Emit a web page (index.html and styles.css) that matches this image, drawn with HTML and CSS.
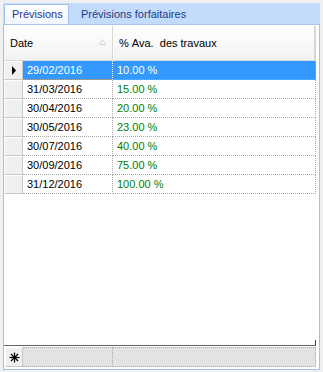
FILE: index.html
```html
<!DOCTYPE html>
<html lang="fr">
<head>
    <meta charset="UTF-8">
    <title>Prévisions</title>
    <link rel="stylesheet" href="styles.css">
</head>
<body>
    <div class="window">
        <div class="tabs">
            <div class="tab active">Prévisions</div>
            <div class="tab">Prévisions forfaitaires</div>
        </div>

        <div class="panel">
            <div class="grid">
                <div class="grid-head">
                    <div class="head-cell head-date">
                        <span>Date</span>
                        <svg class="sort" width="7" height="6" viewBox="0 0 7 6">
                            <path d="M0.5 5.5 L3.5 0.5 L6.5 5.5 Z" fill="none" stroke="#d4d4d4" stroke-width="1"/>
                        </svg>
                    </div>
                    <div class="head-cell head-pct">%&nbsp;Ava.&nbsp; des travaux</div>
                </div>

                <div class="rows">
                    <div class="row selected">
                        <div class="row-head">
                            <svg width="6" height="9" viewBox="0 0 6 9"><path d="M1 0 L5 4.5 L1 9 Z" fill="#000"/></svg>
                        </div>
                        <div class="cell date">29/02/2016</div>
                        <div class="cell pct">10.00 %</div>
                    </div>
                    <div class="row">
                        <div class="row-head"></div>
                        <div class="cell date">31/03/2016</div>
                        <div class="cell pct">15.00 %</div>
                    </div>
                    <div class="row">
                        <div class="row-head"></div>
                        <div class="cell date">30/04/2016</div>
                        <div class="cell pct">20.00 %</div>
                    </div>
                    <div class="row">
                        <div class="row-head"></div>
                        <div class="cell date">30/05/2016</div>
                        <div class="cell pct">23.00 %</div>
                    </div>
                    <div class="row">
                        <div class="row-head"></div>
                        <div class="cell date">30/07/2016</div>
                        <div class="cell pct">40.00 %</div>
                    </div>
                    <div class="row">
                        <div class="row-head"></div>
                        <div class="cell date">30/09/2016</div>
                        <div class="cell pct">75.00 %</div>
                    </div>
                    <div class="row">
                        <div class="row-head"></div>
                        <div class="cell date">31/12/2016</div>
                        <div class="cell pct">100.00 %</div>
                    </div>
                </div>

                <div class="filler"></div>

                <div class="new-row">
                    <div class="row-head">
                        <svg width="11" height="11" viewBox="0 0 11 11">
                            <g stroke="#000" stroke-width="1.2">
                                <line x1="5.5" y1="0.5" x2="5.5" y2="10.5"/>
                                <line x1="0.5" y1="5.5" x2="10.5" y2="5.5"/>
                                <line x1="2" y1="2" x2="9" y2="9"/>
                                <line x1="9" y1="2" x2="2" y2="9"/>
                            </g>
                        </svg>
                    </div>
                    <div class="cell date"></div>
                    <div class="cell pct"></div>
                </div>
            </div>
        </div>
    </div>
</body>
</html>
```

FILE: styles.css
```css
:root {
    --tab-band: #c3dcfb;
    --tab-border: #9fc1ea;
    --select-blue: #3399ff;
    --dots: #a8a8a8;
}

body {
    margin: 0;
    background: #f0f0f0;
    font-family: 'Liberation Sans', Arial, sans-serif;
    font-size: 11px;
    color: #000;
}

.window {
    width: 317px;
    height: 367px;
    padding: 3px 0 0 3px;
}

.tabs {
    display: flex;
    align-items: flex-end;
    height: 21px;
    padding-left: 1px;
    background: var(--tab-band);
}

.tab {
    height: 19px;
    line-height: 18px;
    padding: 0 12px 0 12px;
    color: #1e3a8c;
}

.tab.active {
    height: 20px;
    width: 65px;
    box-sizing: border-box;
    padding: 0 0 0 7px;
    background: linear-gradient(#ffffff, #f1f6fd);
    border: 1px solid var(--tab-border);
    border-bottom: none;
    border-radius: 2px 2px 0 0;
    color: #2e3192;
}

.panel {
    height: 346px;
    box-sizing: border-box;
    border: 1px solid var(--tab-border);
    border-top-color: #a6c6ec;
    background: #fff;
    padding: 1px 3px 2px 0;
}

.grid {
    display: flex;
    flex-direction: column;
    height: 100%;
}

.grid-head {
    display: flex;
    height: 35px;
    box-sizing: border-box;
    background: linear-gradient(#ffffff, #f2f2f2);
    border-bottom: 1px solid #d8d8d8;
    border-right: 2px solid #d6d6d6;
}

.head-cell {
    display: flex;
    align-items: center;
    box-sizing: border-box;
}

.head-date {
    width: 109px;
    padding: 0 0 0 6px;
    justify-content: space-between;
    border-right: 1px solid #d8d8d8;
    box-shadow: 1px 0 0 #fff;
}

.sort {
    margin: 0 6px 3px 0;
}

.head-pct {
    flex: 1;
    padding-left: 6px;
}

.row, .new-row {
    display: flex;
    height: 19px;
}

.row-head {
    width: 19px;
    box-sizing: border-box;
    display: flex;
    align-items: center;
    justify-content: center;
    background: #f0f0f0;
    border-top: 1px solid #fff;
    border-left: 1px solid #fff;
    border-bottom: 1px solid #c8c8c8;
    border-right: 1px solid #c8c8c8;
}

.cell {
    box-sizing: border-box;
    border-bottom: 1px dotted var(--dots);
    line-height: 18px;
    white-space: nowrap;
}

.cell.date {
    width: 90px;
    padding-left: 4px;
    border-right: 1px dotted var(--dots);
}

.cell.pct {
    flex: 1;
    padding-left: 4px;
    color: #008000;
    border-right: 1px dotted var(--dots);
}

.row.selected .cell {
    background: var(--select-blue);
    color: #fff;
}

.row.selected .cell.date {
    border-right-color: #ffffff;
}

.filler {
    flex: 1;
    border-bottom: 1px solid #666;
    position: relative;
}

.filler::after {
    content: "";
    position: absolute;
    right: 0;
    bottom: 0;
    width: 1px;
    height: 5px;
    background: #444;
}

.new-row {
    height: 20px;
    margin-top: 1px;
}

.new-row .row-head {
    margin-left: 1px;
    width: 18px;
    background: #efefef;
}

.new-row .cell {
    background: #e3e3e3;
    border-top: 1px dotted var(--dots);
}

.new-row .cell.date {
    width: 90px;
}
```
